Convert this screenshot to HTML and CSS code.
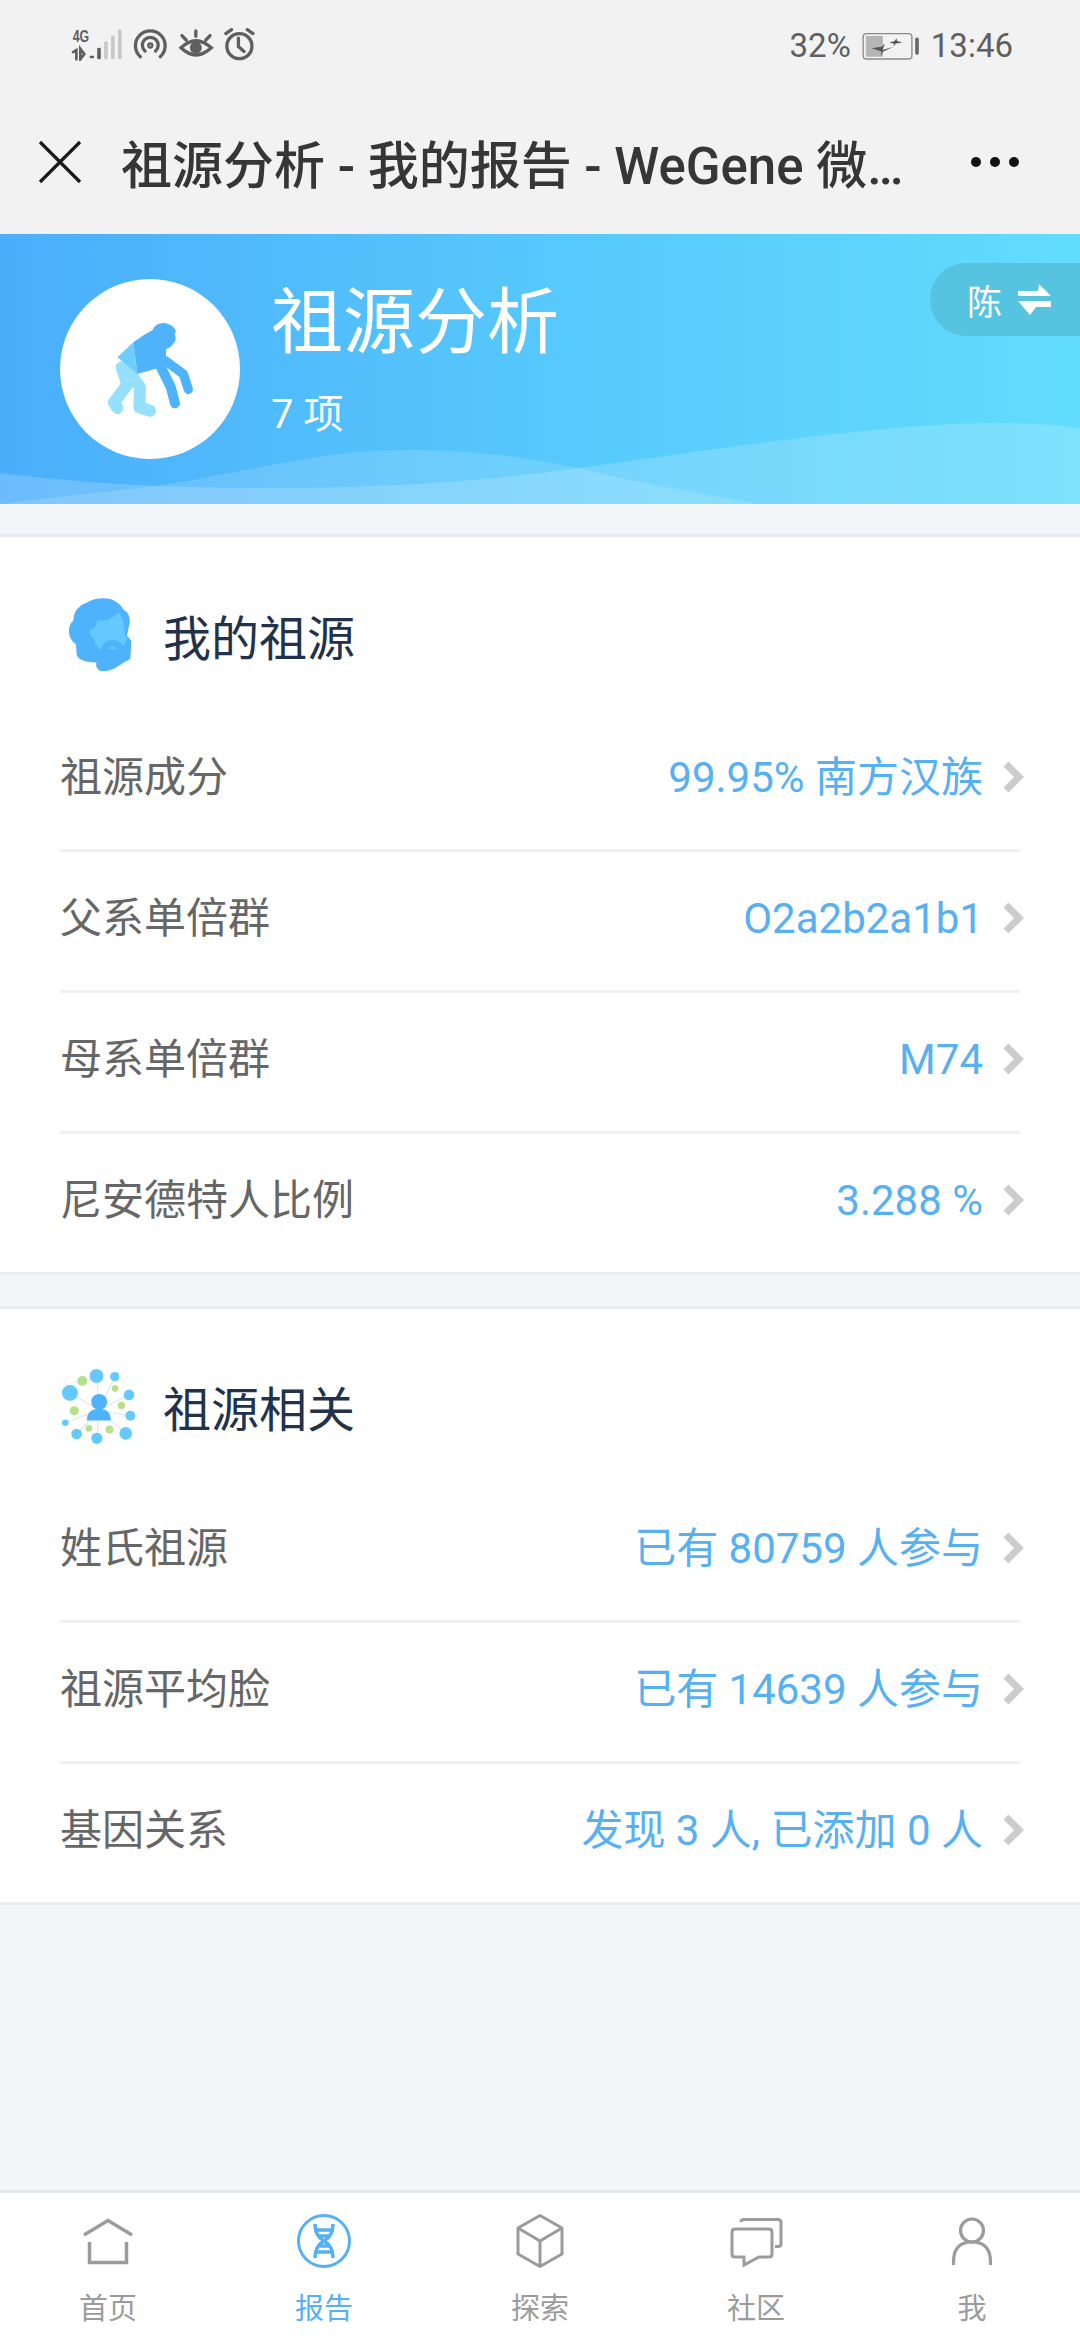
FILE: index.html
```html
<!DOCTYPE html>
<html lang="zh-CN">
<head>
    <meta charset="UTF-8">
    <meta name="viewport" content="width=device-width, initial-scale=1.0">
    <title>祖源分析</title>
    <link rel="stylesheet" href="styles.css">
</head>
<body>
    <div class="status-bar">
        <svg class="status-icons" width="187" height="33" viewBox="60 55 560 100" fill="none" stroke="#5f5f5f" stroke-linecap="round">
            <text x="65" y="98" class="net-text" textLength="50" lengthAdjust="spacingAndGlyphs">4G</text>
            <path d="M66 128l10-6v28M88 118v32l12-16zM120 143h6" stroke-width="8"/>
            <rect x="139" y="115" width="11" height="35" rx="4" fill="#5f5f5f" stroke="none"/>
            <rect x="160" y="95" width="11" height="55" rx="4" fill="#c8c8c8" stroke="none"/>
            <rect x="181" y="78" width="11" height="72" rx="4" fill="#c8c8c8" stroke="none"/>
            <rect x="202" y="60" width="11" height="90" rx="4" fill="#c8c8c8" stroke="none"/>
            <g stroke-width="10">
                <path d="M270 142a45 45 0 1 1 60 0"/>
                <path d="M284 125a24 24 0 1 1 32 0"/>
                <circle cx="300" cy="108" r="6" stroke-width="7"/>
                <path d="M393 115Q438 72 485 115Q438 158 393 115z"/>
                <path d="M438 64v16M396 78l13 14M481 78l-13 14"/>
                <circle cx="570" cy="110" r="38"/>
                <path d="M567 86v25l17 15M529 72l17-12M611 72l-17-12"/>
            </g>
            <circle cx="438" cy="115" r="18" fill="#5f5f5f" stroke="none"/>
        </svg>
        <div class="status-right">
            <span>32%</span>
            <svg class="battery" width="57" height="27" viewBox="276 66 172 82" fill="none">
                <rect x="279" y="68" width="148" height="77" rx="10" stroke="#8a8a8a" stroke-width="4"/>
                <rect x="287" y="75" width="52" height="63" rx="3" fill="#b5b5b5"/>
                <path d="M305 112L335 108L345 98L338 118L372 108L340 122L332 135L335 122zM358 95L375 90L380 82L382 90L398 95L378 98L372 106L372 98z" fill="#555"/>
                <rect x="437" y="80" width="11" height="52" rx="5" fill="#666"/>
            </svg>
            <span class="status-time">13:46</span>
        </div>
    </div>

    <nav class="nav-bar">
        <svg class="nav-close" width="44" height="44" viewBox="0 0 44 44" fill="none" stroke="#1a1a1a" stroke-width="3.200">
            <path d="M2 2l40 40M42 2L2 42"/>
        </svg>
        <div class="nav-title">祖源分析 - 我的报告 - WeGene 微…</div>
        <div class="nav-more"><i></i><i></i><i></i></div>
    </nav>

    <header class="banner">
        <svg class="banner-waves" width="1080" height="270" viewBox="0 0 1080 270">
            <path d="M0 270C60 262 110 258 162 251C250 238 320 216 406 216C470 216 520 222 578 234C640 250 700 258 757 270z" fill="#fff" fill-opacity=".15"/>
            <path d="M0 239C90 250 170 254 262 254C380 254 480 248 578 234C720 215 880 189 998 189C1030 189 1060 190 1080 195V270H0z" fill="#fff" fill-opacity=".18"/>
        </svg>
        <div class="avatar">
            <svg width="180" height="180" viewBox="60 55 540 540" fill="none" stroke-linecap="round" stroke-linejoin="round">
                <path d="M245 320L262 372L222 425L232 442M268 335L300 380L298 440L330 450" stroke="#95e0ff" stroke-width="36"/>
                <path d="M232 290L280 245L292 340z" fill="#6ccdff"/>
                <path d="M280 245Q310 222 338 208Q345 187 372 187Q400 190 408 212L404 220Q412 240 398 252Q388 262 378 266L378 300L355 322L292 340z" fill="#4fb3fb"/>
                <path d="M376 300L430 340L445 386" stroke="#4fb3fb" stroke-width="28"/>
                <path d="M362 318L392 378L405 428" stroke="#4fb3fb" stroke-width="30"/>
            </svg>
        </div>
        <div class="banner-text">
            <h1>祖源分析</h1>
            <p>7 项</p>
        </div>
        <div class="switch-pill">
            <span>陈</span>
            <svg width="33" height="31" viewBox="0 0 33 31" fill="#fff">
                <path d="M0 7H20L21 0L33 12H0zM0 17H33V23H18L12 31z"/>
            </svg>
        </div>
    </header>

    <section class="card">
        <div class="card-head">
            <svg class="head-icon" width="73" height="78" viewBox="60 50 220 235">
                <path d="M140 70Q175 50 215 60Q245 75 250 90Q272 100 270 130L262 170L275 185L272 240Q250 250 235 262Q210 280 180 275Q165 265 170 250Q115 250 110 225L108 195Q85 180 87 150Q90 130 100 125Q100 85 140 70z" fill="#4fb3fb"/>
                <path d="M172 125Q215 125 238 100Q255 125 255 165L262 178Q258 195 250 200Q235 180 210 183Q190 185 185 212Q165 205 163 180Q145 170 150 150Q168 150 172 125z" fill="#63c9ff"/>
                <path d="M205 210Q218 195 232 210z" fill="#63c9ff"/>
            </svg>
            <h2>我的祖源</h2>
        </div>
        <a class="row"><span class="row-label">祖源成分</span><span class="row-value">99.95% 南方汉族</span><svg class="chev" viewBox="0 0 21 32"><path d="M3 3l13 13-13 13"/></svg></a>
        <a class="row"><span class="row-label">父系单倍群</span><span class="row-value">O2a2b2a1b1</span><svg class="chev" viewBox="0 0 21 32"><path d="M3 3l13 13-13 13"/></svg></a>
        <a class="row"><span class="row-label">母系单倍群</span><span class="row-value">M74</span><svg class="chev" viewBox="0 0 21 32"><path d="M3 3l13 13-13 13"/></svg></a>
        <a class="row"><span class="row-label">尼安德特人比例</span><span class="row-value">3.288 %</span><svg class="chev" viewBox="0 0 21 32"><path d="M3 3l13 13-13 13"/></svg></a>
    </section>

    <section class="card second">
        <div class="card-head">
            <svg class="head-icon" width="78" height="78" viewBox="60 50 235 235">
                <path d="M178 180L90 128M178 180L170 77M178 180L225 79M178 180L268 134M178 180L272 197M178 180L258 250M178 180L171 265M178 180L110 252M178 180L76 218" stroke="#e6e8ea" stroke-width="4"/>
                <g fill="#63c9ff">
                    <circle cx="90" cy="128" r="24"/><circle cx="170" cy="77" r="21"/><circle cx="225" cy="79" r="14"/>
                    <circle cx="268" cy="134" r="16"/><circle cx="272" cy="197" r="15"/><circle cx="258" cy="250" r="19"/>
                    <circle cx="171" cy="265" r="17"/><circle cx="110" cy="252" r="16"/><circle cx="76" cy="218" r="10"/>
                </g>
                <g fill="#b6e18a">
                    <circle cx="127" cy="92" r="15"/><circle cx="226" cy="115" r="10"/><circle cx="245" cy="166" r="11"/>
                    <circle cx="209" cy="238" r="12"/><circle cx="147" cy="235" r="10"/><circle cx="103" cy="182" r="14"/>
                </g>
                <circle cx="178" cy="155" r="24" fill="#4fb3fb"/>
                <path d="M141 211Q141 176 178 176Q213 176 213 211z" fill="#4fb3fb"/>
            </svg>
            <h2>祖源相关</h2>
        </div>
        <a class="row"><span class="row-label">姓氏祖源</span><span class="row-value">已有 80759 人参与</span><svg class="chev" viewBox="0 0 21 32"><path d="M3 3l13 13-13 13"/></svg></a>
        <a class="row"><span class="row-label">祖源平均脸</span><span class="row-value">已有 14639 人参与</span><svg class="chev" viewBox="0 0 21 32"><path d="M3 3l13 13-13 13"/></svg></a>
        <a class="row"><span class="row-label">基因关系</span><span class="row-value">发现 3 人, 已添加 0 人</span><svg class="chev" viewBox="0 0 21 32"><path d="M3 3l13 13-13 13"/></svg></a>
    </section>

    <div class="spacer"></div>

    <footer class="tabbar">
        <div class="tab">
            <svg width="56" height="56" viewBox="0 0 56 56" fill="none" stroke="#9b9b9b" stroke-width="3.500">
                <path d="M4 22L28 7.500L52 22M9.500 29V49.500H46.500V29"/>
            </svg>
            <span>首页</span>
        </div>
        <div class="tab active">
            <svg width="56" height="56" viewBox="0 0 56 56" fill="none" stroke="#56b0f2" stroke-width="3">
                <circle cx="28" cy="28" r="25.500"/>
                <path d="M19 11q0 12 9 17q9 5 9 17M37 11q0 12-9 17q-9 5-9 17M18 17h20M22 23h12M22 33h12M18 39h20" stroke-width="3.500"/>
            </svg>
            <span>报告</span>
        </div>
        <div class="tab">
            <svg width="56" height="56" viewBox="0 0 56 56" fill="none" stroke="#9b9b9b" stroke-width="3" stroke-linejoin="round">
                <path d="M28 2.500L50 15V41L28 53.500L6 41V15zM6 15L28 28L50 15M28 28V53.500"/>
            </svg>
            <span>探索</span>
        </div>
        <div class="tab">
            <svg width="56" height="56" viewBox="0 0 56 56" fill="none" stroke="#9b9b9b" stroke-width="3">
                <path d="M13 9V9q0-2.500 3-2.500h34q3 0 3 3v21q0 3-3 3h-3"/>
                <path d="M4 19q0-3 3-3h34q3 0 3 3v22q0 3-3 3H31l-15 8v-8H7q-3 0-3-3z"/>
            </svg>
            <span>社区</span>
        </div>
        <div class="tab">
            <svg width="56" height="56" viewBox="0 0 56 56" fill="none" stroke="#9b9b9b" stroke-width="3.200">
                <circle cx="28" cy="17.500" r="11.500"/>
                <path d="M9.500 52V49q0-20 18.500-20q18.500 0 18.500 20v3"/>
            </svg>
            <span>我</span>
        </div>
    </footer>
</body>
</html>
```

FILE: styles.css
```css
html, body {
    margin: 0;
    padding: 0;
    height: 2340px;
    overflow: hidden;
}

body {
    width: 1080px;
    display: flex;
    flex-direction: column;
    background-color: #f3f6f9;
    font-family: Roboto, "Noto Sans CJK SC", sans-serif;
}

/* status bar */
.status-bar {
    height: 90px;
    padding: 28px 67px 0 70px;
    box-sizing: border-box;
    display: flex;
    justify-content: space-between;
    align-items: flex-start;
    background-color: #f2f2f2;
    color: #5f5f5f;
}

.net-text {
    font-family: "Liberation Sans", sans-serif;
    font-size: 50px;
    font-weight: bold;
    fill: #5f5f5f;
    stroke: none;
}

.status-right {
    display: flex;
    align-items: center;
    font-size: 33px;
    line-height: 40px;
    margin-top: -2px;
}

.battery {
    margin-left: 11px;
    margin-right: 12px;
}

/* title bar */
.nav-bar {
    height: 144px;
    padding: 0 61px 0 38px;
    box-sizing: border-box;
    display: flex;
    align-items: center;
    background-color: #f2f2f2;
}

.nav-close {
    flex: none;
}

.nav-title {
    flex: 1;
    margin-left: 39px;
    font-size: 51px;
    font-weight: 500;
    color: #363636;
    white-space: nowrap;
}

.nav-more {
    display: flex;
    gap: 9px;
}

.nav-more i {
    width: 10px;
    height: 10px;
    border-radius: 50%;
    background-color: #111;
}

/* banner */
.banner {
    position: relative;
    height: 270px;
    padding: 45px 0 0 60px;
    box-sizing: border-box;
    display: flex;
    background: linear-gradient(90deg, #4baefb 0%, #56c8fc 50%, #62dcfc 100%);
    overflow: hidden;
    color: #fff;
}

.banner-waves {
    position: absolute;
    left: 0;
    top: 0;
}

.avatar {
    position: relative;
    width: 180px;
    height: 180px;
    border-radius: 50%;
    background-color: #fff;
    overflow: hidden;
}

.banner-text {
    position: relative;
    margin-left: 31px;
}

.banner-text h1 {
    margin: 2px 0 0;
    font-size: 72px;
    line-height: 84px;
    font-weight: 400;
}

.banner-text p {
    margin: 26px 0 0;
    font-size: 40px;
    line-height: 48px;
}

.switch-pill {
    position: absolute;
    right: 0;
    top: 29px;
    width: 150px;
    height: 73px;
    padding-left: 37px;
    box-sizing: border-box;
    border-radius: 36px 0 0 36px;
    background-color: #56c3e1;
    display: flex;
    align-items: center;
    gap: 16px;
    font-size: 35px;
}

/* list cards */
.card {
    margin-top: 30px;
    background-color: #fff;
    border-top: 3px solid #e9edf1;
    border-bottom: 3px solid #e9edf1;
    box-sizing: border-box;
    height: 741px;
}

.card.second {
    margin-top: 31px;
    height: 599px;
}

.card-head {
    height: 171px;
    padding: 24px 60px 0;
    display: flex;
    align-items: center;
    gap: 30px;
    box-sizing: border-box;
}

.card.second .card-head {
    height: 170px;
    gap: 25px;
}

.head-icon {
    flex: none;
}

.card-head h2 {
    margin: 0;
    font-size: 48px;
    font-weight: 400;
    color: #22324a;
}

.row {
    height: 141px;
    margin: 0 60px;
    padding-bottom: 4px;
    display: flex;
    align-items: center;
    border-top: 3px solid #eef0f4;
    box-sizing: border-box;
    line-height: 50px;
}

.card-head + .row {
    border-top-color: transparent;
}

.row-label {
    flex: 1;
    font-size: 42px;
    color: #666;
}

.row-value {
    font-size: 42px;
    color: #56b0f2;
}

.chev {
    width: 21px;
    height: 32px;
    margin-left: 20px;
    margin-right: -4px;
    margin-bottom: 2px;
    fill: none;
    stroke: #cccccc;
    stroke-width: 7;
}

.spacer {
    flex: 1;
}

/* bottom tabs */
.tabbar {
    height: 150px;
    padding-top: 20px;
    box-sizing: border-box;
    display: grid;
    grid-template-columns: repeat(5, 1fr);
    background-color: #fff;
    border-top: 3px solid #e1e6ea;
}

.tab {
    display: flex;
    flex-direction: column;
    align-items: center;
    gap: 23px;
    font-size: 29px;
    line-height: 34px;
    color: #9b9b9b;
}

.tab.active {
    color: #56b0f2;
}
```
